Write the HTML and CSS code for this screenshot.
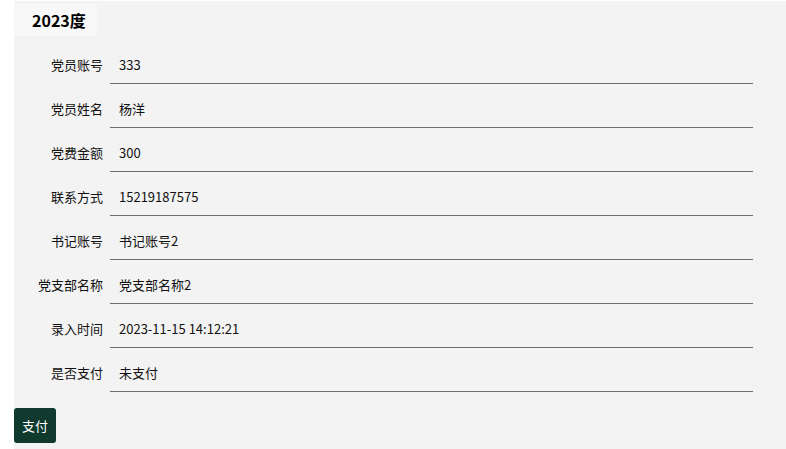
FILE: index.html
```html
<!DOCTYPE html>
<html>
  <head>
    <meta charset="UTF-8">
    <title>党费缴纳</title>
    <link rel="stylesheet" href="styles.css">
  </head>
  <body>
    <div class="page">
      <div class="year-title">2023度</div>
      <form class="fee-form">
        <div class="form-row">
          <label>党员账号</label>
          <div class="field">333</div>
        </div>
        <div class="form-row">
          <label>党员姓名</label>
          <div class="field">杨洋</div>
        </div>
        <div class="form-row">
          <label>党费金额</label>
          <div class="field">300</div>
        </div>
        <div class="form-row">
          <label>联系方式</label>
          <div class="field">15219187575</div>
        </div>
        <div class="form-row">
          <label>书记账号</label>
          <div class="field">书记账号2</div>
        </div>
        <div class="form-row">
          <label>党支部名称</label>
          <div class="field">党支部名称2</div>
        </div>
        <div class="form-row">
          <label>录入时间</label>
          <div class="field">2023-11-15 14:12:21</div>
        </div>
        <div class="form-row">
          <label>是否支付</label>
          <div class="field">未支付</div>
        </div>
        <div class="submit-group">
          <button type="button" class="primary">支付</button>
        </div>
      </form>
    </div>
  </body>
</html>
```

FILE: styles.css
```css
* {
  box-sizing: border-box;
}
html, body {
  height: 100%;
}
body {
  margin: 0;
  background-color: #FFFFFF;
  font-family: "Noto Sans CJK SC", "Noto Sans", sans-serif;
  font-size: 13px;
  color: #111;
}
.page {
  margin-left: 14px;
  margin-top: 1px;
  min-height: calc(100% - 1px);
  background-color: #F3F3F3;
}
.year-title {
  display: inline-block;
  margin-top: 3px;
  padding: 0 11px 0 18px;
  height: 32px;
  line-height: 32px;
  background-color: #F8F8F8;
  font-size: 16px;
  font-weight: bold;
  color: #000;
}
.fee-form {
  margin-top: 4px;
}
.form-row {
  display: flex;
  align-items: flex-end;
  height: 44px;
}
.form-row label {
  width: 89px;
  text-align: right;
  line-height: 20px;
  padding-bottom: 9px;
}
.field {
  width: 643px;
  margin-left: 7px;
  padding: 0 0 8px 9px;
  line-height: 20px;
  border-bottom: 1px solid #6E6E6E;
}
.submit-group {
  padding-top: 16px;
  padding-bottom: 6px;
}
button {
  font-family: inherit;
  font-size: 13px;
  cursor: pointer;
}
button.primary {
  height: 35px;
  width: 42px;
  padding: 0;
  border: none;
  border-radius: 3px;
  background-color: #0F3A2D;
  color: #FFF;
}
```
